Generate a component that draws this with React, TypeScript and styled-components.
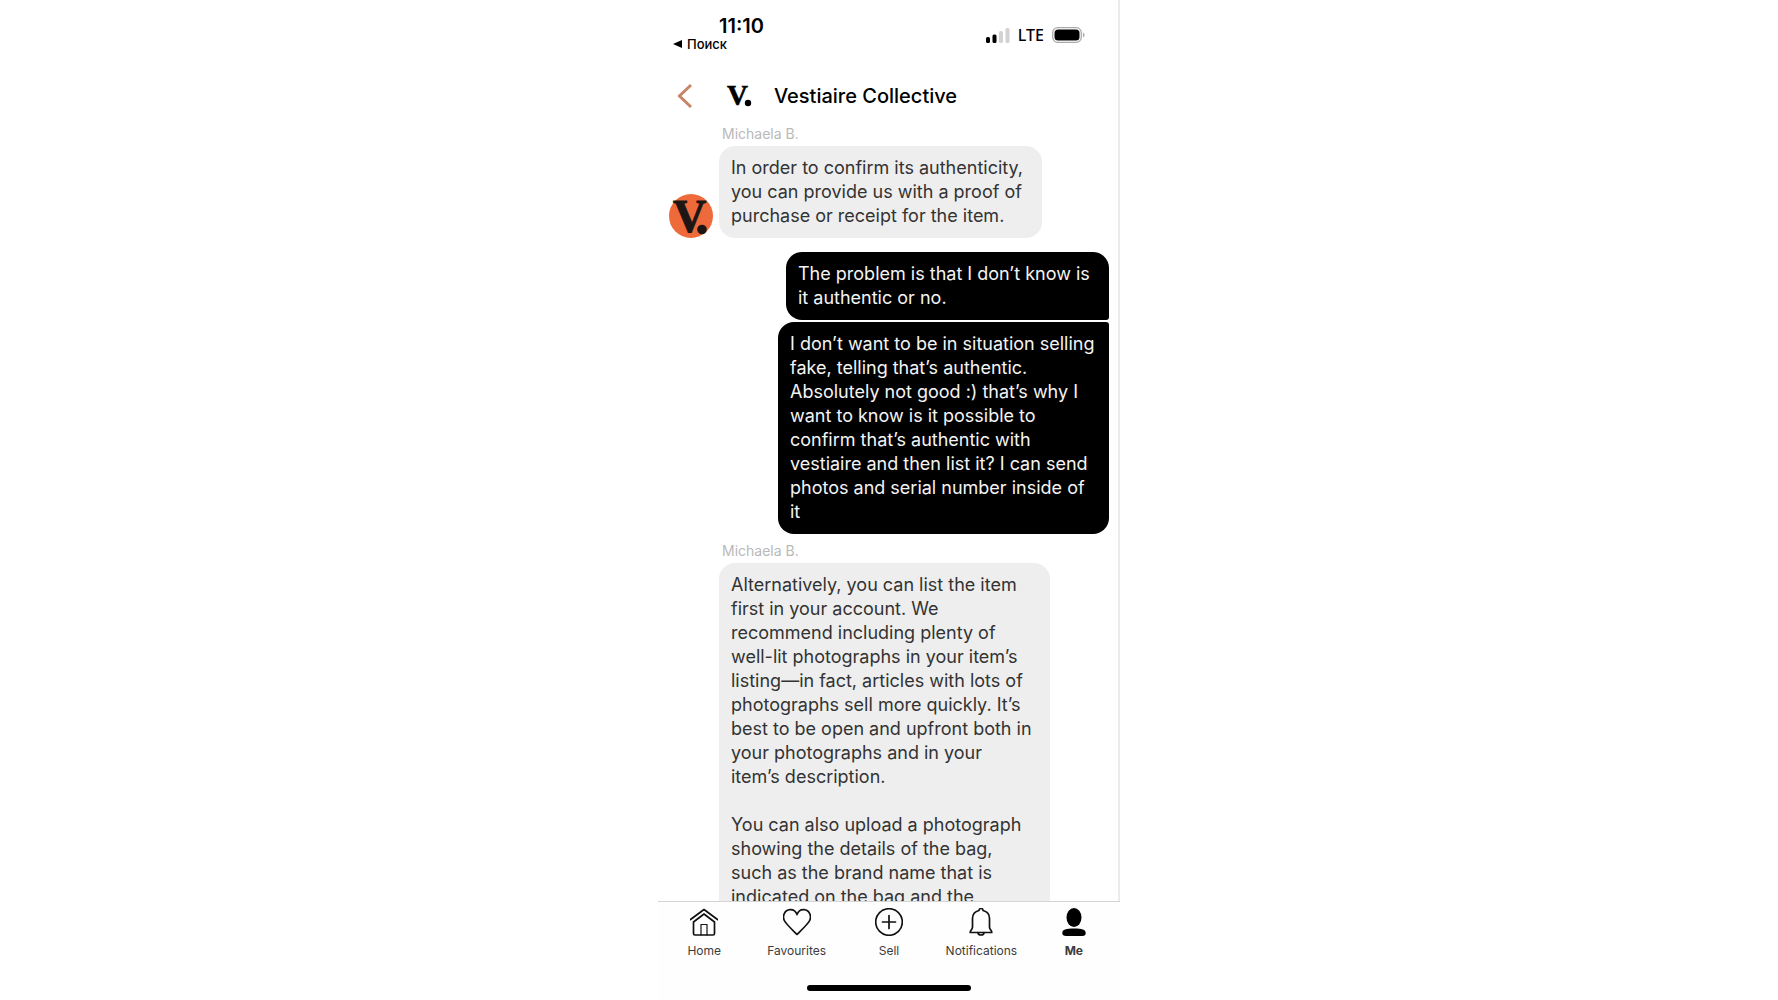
import React from "react";
import styled, { createGlobalStyle } from "styled-components";

const GlobalStyle = createGlobalStyle`
  * { box-sizing: border-box; }
  body { margin: 0; background: #fff; font-family: Inter, "Liberation Sans", sans-serif; color: #000; }
  button { border: 0; padding: 0; background: none; color: inherit; font: inherit; cursor: pointer; }
`;

const Phone = styled.main`
  display: flex;
  flex-direction: column;
  width: 100%;
  max-width: 462px;
  height: 100vh;
  margin: 0 auto;
  overflow: hidden;
  background: #fff;
`;

const Screen = styled.div`
  flex: 1;
  min-height: 0;
  display: flex;
  flex-direction: column;
  border-right: 2px solid #ebebeb;
`;

const StatusBar = styled.div`
  display: flex;
  justify-content: space-between;
  flex: none;
  height: 72px;
  padding: 15px 33px 0 15px;
`;

const ClockArea = styled.div`
  display: flex;
  flex-direction: column;
`;

const Clock = styled.time`
  padding-left: 46px;
  font-size: 20px;
  line-height: 22px;
  font-weight: 600;
`;

const BackToApp = styled.button`
  display: flex;
  align-items: center;
  gap: 5px;
  font-size: 13px;
  line-height: 14px;
  font-weight: 500;
`;

const Indicators = styled.div`
  display: flex;
  align-items: center;
  gap: 8px;
  height: 40px;
`;

const Network = styled.span`
  font-family: "Noto Sans", sans-serif;
  font-size: 16px;
  line-height: 20px;
  font-weight: 500;
`;

const Header = styled.header`
  display: flex;
  align-items: center;
  flex: none;
  height: 48px;
  padding-left: 18px;
`;

const BackButton = styled.button`
  display: flex;
  width: 50px;
`;

const BrandMark = styled.svg`
  flex: none;
  overflow: visible;
  font-family: "Liberation Serif", serif;
  font-weight: 700;
`;

const Title = styled.h1`
  margin: 0 0 0 20px;
  font-size: 20px;
  line-height: 24px;
  font-weight: 500;
`;

const Thread = styled.section`
  flex: 1;
  min-height: 0;
  overflow: hidden;
  display: flex;
  flex-direction: column;
  padding: 5px 9px 0 11px;
`;

const Sender = styled.div`
  flex: none;
  padding: 0 0 3px 53px;
  font-size: 14px;
  line-height: 18px;
  color: #b9b9b9;
`;

const Incoming = styled.div`
  display: flex;
  align-items: flex-end;
  gap: 6px;
  flex: none;
  margin-bottom: 14px;
`;

const AvatarSlot = styled.div`
  display: flex;
  width: 44px;
`;

const Bubble = styled.p<{ $mine?: boolean; $wide?: boolean; $join?: "top" | "bottom" }>`
  flex: none;
  margin: 0;
  width: ${(p) => (p.$wide ? 331 : 323)}px;
  padding: 10px 0 10px 12px;
  border-radius: 16px;
  ${(p) => p.$join === "bottom" && "border-bottom-right-radius: 3px;"}
  ${(p) => p.$join === "top" && "border-top-right-radius: 3px;"}
  background: ${(p) => (p.$mine ? "#000" : "#eee")};
  color: ${(p) => (p.$mine ? "#f4f4f4" : "#333")};
  font-size: 18px;
  line-height: 24px;
  white-space: pre-line;
`;

const Outgoing = styled.div`
  display: flex;
  flex-direction: column;
  align-items: flex-end;
  gap: 2px;
  flex: none;
  margin-bottom: 8px;
`;

const TabBar = styled.nav`
  display: grid;
  grid-template-columns: repeat(5, 1fr);
  flex: none;
  border-top: 1px solid #d4d4d4;
  background: #fefefe;
  padding-top: 6px;
`;

const Tab = styled.button<{ $active?: boolean }>`
  display: flex;
  flex-direction: column;
  align-items: center;
  gap: 6px;
  font-size: 12px;
  line-height: 18px;
  font-weight: ${(p) => (p.$active ? 700 : 400)};
  color: #3c3c3c;
`;

const HomeIndicator = styled.div`
  display: flex;
  justify-content: center;
  flex: none;
  padding: 25px 0 9px;
  background: #fefefe;

  &::after {
    content: "";
    width: 164px;
    height: 6px;
    border-radius: 3px;
    background: #000;
  }
`;

const icons = {
  home: (
    <>
      <path d="M.5 11.500 14 1.500l13.500 10" />
      <path d="M3.500 14 14 6l10.500 8v11.500a1.500 1.500 0 0 1-1.500 1.500H5a1.500 1.500 0 0 1-1.500-1.500Z" />
      <path d="M11 27V16.500h6V27" strokeWidth="1.200" />
    </>
  ),
  heart: <path d="M14 26.500C11 23.500 3 16 1.300 12.500-.8 8 1.500 2 7 1.600c3.500-.2 6 2 7 5 1-3 3.500-5.200 7-5 5.500.4 7.800 6.400 5.700 10.900C25 16 17 23.500 14 26.500Z" />,
  sell: (
    <>
      <circle cx="14" cy="14" r="13.300" />
      <path d="M14 7.500v13M7.500 14h13" />
    </>
  ),
  bell: (
    <>
      <path d="M12 2.500a2 2 0 0 1 4 0c4 1 6.500 3.800 6.500 8V19c0 2.500 2.300 3.500 2.300 5.500H3.200C3.200 22.500 5.500 21.500 5.500 19v-8.500c0-4.200 2.500-7 6.500-8Z" />
      <path d="M11 24.500a3 2.500 0 0 0 6 0" />
    </>
  ),
  me: (
    <g fill="#000" stroke="none">
      <ellipse cx="14" cy="9.500" rx="7.500" ry="9.500" />
      <path d="M2.300 24.800c0-3 3.700-4.300 11.700-4.300s11.700 1.300 11.700 4.300c0 2.700-1.200 3.200-4 3.200H6.300c-2.800 0-4-.5-4-3.200Z" />
    </g>
  ),
};

const tabs: { label: string; icon: keyof typeof icons; active?: boolean }[] = [
  { label: "Home", icon: "home" },
  { label: "Favourites", icon: "heart" },
  { label: "Sell", icon: "sell" },
  { label: "Notifications", icon: "bell" },
  { label: "Me", icon: "me", active: true },
];

const proofRequest = `In order to confirm its authenticity,
you can provide us with a proof of
purchase or receipt for the item.`;

const problem = `The problem is that I don’t know is
it authentic or no.`;

const question = `I don’t want to be in situation selling
fake, telling that’s authentic.
Absolutely not good :) that’s why I
want to know is it possible to
confirm that’s authentic with
vestiaire and then list it? I can send
photos and serial number inside of
it`;

const advice = `Alternatively, you can list the item
first in your account. We
recommend including plenty of
well-lit photographs in your item’s
listing—in fact, articles with lots of
photographs sell more quickly. It’s
best to be open and upfront both in
your photographs and in your
item’s description.

You can also upload a photograph
showing the details of the bag,
such as the brand name that is
indicated on the bag and the`;

export default function App() {
  return (
    <>
      <GlobalStyle />
      <Phone>
        <Screen>
          <StatusBar>
            <ClockArea>
              <Clock>11:10</Clock>
              <BackToApp>
                <svg width="9" height="8" viewBox="0 0 9 8" aria-hidden="true">
                  <path d="M0 4 9 0v8Z" />
                </svg>
                Поиск
              </BackToApp>
            </ClockArea>
            <Indicators>
              <svg width="24" height="15" viewBox="0 0 24 15" aria-hidden="true">
                <rect x="0" y="9" width="4" height="6" rx="1.500" />
                <rect x="6.500" y="6.500" width="4" height="8.500" rx="1.500" />
                <rect x="13" y="3" width="4" height="12" rx="1.500" fill="#d2d2d2" />
                <rect x="19.500" y="0" width="4" height="15" rx="1.500" fill="#d2d2d2" />
              </svg>
              <Network>LTE</Network>
              <svg width="33" height="16" viewBox="0 0 33 16" aria-hidden="true">
                <rect x=".7" y=".7" width="28.600" height="14.600" rx="5" fill="none" stroke="#aaa" strokeWidth="1.300" />
                <rect x="2.500" y="2.500" width="25" height="11" rx="3.500" />
                <path d="M31 5.500c2 .7 2 4.300 0 5Z" fill="#aaa" />
              </svg>
            </Indicators>
          </StatusBar>
          <Header>
            <BackButton aria-label="Back">
              <svg width="18" height="26" viewBox="0 0 18 26" fill="none" stroke="#c98468" strokeWidth="3">
                <path d="M15 2 3.500 13 15 24" />
              </svg>
            </BackButton>
            <BrandMark width="28" height="24" viewBox="0 0 28 24" aria-hidden="true">
              <text x="1" y="21" fontSize="29" stroke="#000" strokeWidth=".6">V</text>
              <circle cx="22" cy="19" r="3.200" />
            </BrandMark>
            <Title>Vestiaire Collective</Title>
          </Header>
          <Thread>
            <Sender>Michaela B.</Sender>
            <Incoming>
              <AvatarSlot>
                <BrandMark width="44" height="44" viewBox="0 0 44 44" aria-hidden="true">
                  <circle cx="22" cy="22" r="22" fill="#ee6a3a" />
                  <text x="4" y="38" fontSize="46" fill="#1c1614" stroke="#1c1614">V</text>
                  <circle cx="33" cy="35.500" r="4.800" fill="#1c1614" />
                </BrandMark>
              </AvatarSlot>
              <Bubble>{proofRequest}</Bubble>
            </Incoming>
            <Outgoing>
              <Bubble $mine $join="bottom">{problem}</Bubble>
              <Bubble $mine $wide $join="top">{question}</Bubble>
            </Outgoing>
            <Sender>Michaela B.</Sender>
            <Incoming>
              <AvatarSlot />
              <Bubble $wide>{advice}</Bubble>
            </Incoming>
          </Thread>
        </Screen>
        <TabBar>
          {tabs.map((tab) => (
            <Tab key={tab.label} $active={tab.active}>
              <svg width="28" height="28" viewBox="0 0 28 28" fill="none" stroke="#111" strokeWidth="1.700" strokeLinejoin="round" strokeLinecap="round" aria-hidden="true">
                {icons[tab.icon]}
              </svg>
              {tab.label}
            </Tab>
          ))}
        </TabBar>
        <HomeIndicator />
      </Phone>
    </>
  );
}
